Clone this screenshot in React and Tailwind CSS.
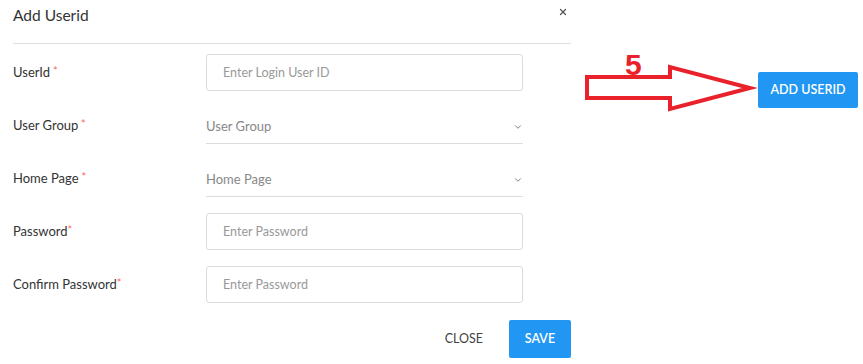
import React from "react";
import { X, ChevronDown } from "lucide-react";

const fields = [
  { label: "UserId", star: " *", kind: "input", placeholder: "Enter Login User ID" },
  { label: "User Group", star: " *", kind: "select", placeholder: "User Group" },
  { label: "Home Page", star: " *", kind: "select", placeholder: "Home Page" },
  { label: "Password", star: "*", kind: "input", placeholder: "Enter Password" },
  { label: "Confirm Password", star: "*", kind: "input", placeholder: "Enter Password" },
];

export default function App() {
  return (
    <div className="flex w-[863px] h-[364px] bg-white text-[#333] font-['Lato',sans-serif] overflow-hidden">
      {/* modal */}
      <div className="w-[584px] px-[13px]">
        <div className="flex items-start justify-between h-[44px] border-b border-[#dedede]">
          <h2 className="text-[15.5px] leading-[22px] mt-[4px] text-[#333]">Add Userid</h2>
          <button className="mt-[7px] mr-[3px] text-[#555]">
            <X size={10} strokeWidth={3} />
          </button>
        </div>

        <div className="flex flex-col gap-[16px] mt-[10px]">
          {fields.map((f) => (
            <Row key={f.label} {...f} />
          ))}
        </div>

        <div className="flex justify-end items-center mt-[17px]">
          <button className="text-[12.5px] text-[#444] mr-[26px]">CLOSE</button>
          <button className="w-[62px] h-[38px] rounded-[2px] bg-[#2196f3] text-white text-[12.5px] font-semibold">
            SAVE
          </button>
        </div>
      </div>

      {/* annotation + button */}
      <div className="flex items-start pt-[40px]">
        <svg width="174" height="72" viewBox="0 0 174 72">
          <polygon
            points="3,37 86,37 86,27 166,48 86,69 86,58 3,58"
            fill="white"
            stroke="#e8212b"
            strokeWidth="4"
            strokeLinejoin="miter"
          />
          <text
            x="41"
            y="35"
            fill="#e8212b"
            fontSize="30"
            fontWeight="bold"
            fontFamily="Liberation Sans, Arial, sans-serif"
          >
            5
          </text>
        </svg>
        <button className="mt-[32px] w-[100px] h-[36px] rounded-[2px] bg-[#2196f3] text-white text-[12.5px] font-semibold">
          ADD USERID
        </button>
      </div>
    </div>
  );
}

function Row({ label, star, kind, placeholder }) {
  return (
    <div className="flex items-center h-[37px]">
      <label className="w-[193px] text-[13px] text-[#333] pt-[1px]">
        {label}
        <span className="text-[#f66] text-[11px] align-top">{star}</span>
      </label>
      {kind === "input" ? (
        <div className="w-[317px] h-[37px] border border-[#dcdcdc] rounded-[3px] flex items-center pl-[16px] pt-[2px] text-[12.5px] text-[#999]">
          {placeholder}
        </div>
      ) : (
        <div className="w-[317px] h-[37px] border-b border-[#dcdcdc] flex items-center justify-between text-[13px] text-[#888] pt-[3px]">
          <span>{placeholder}</span>
          <ChevronDown size={10} strokeWidth={2} className="text-[#666] mr-[0px]" />
        </div>
      )}
    </div>
  );
}
